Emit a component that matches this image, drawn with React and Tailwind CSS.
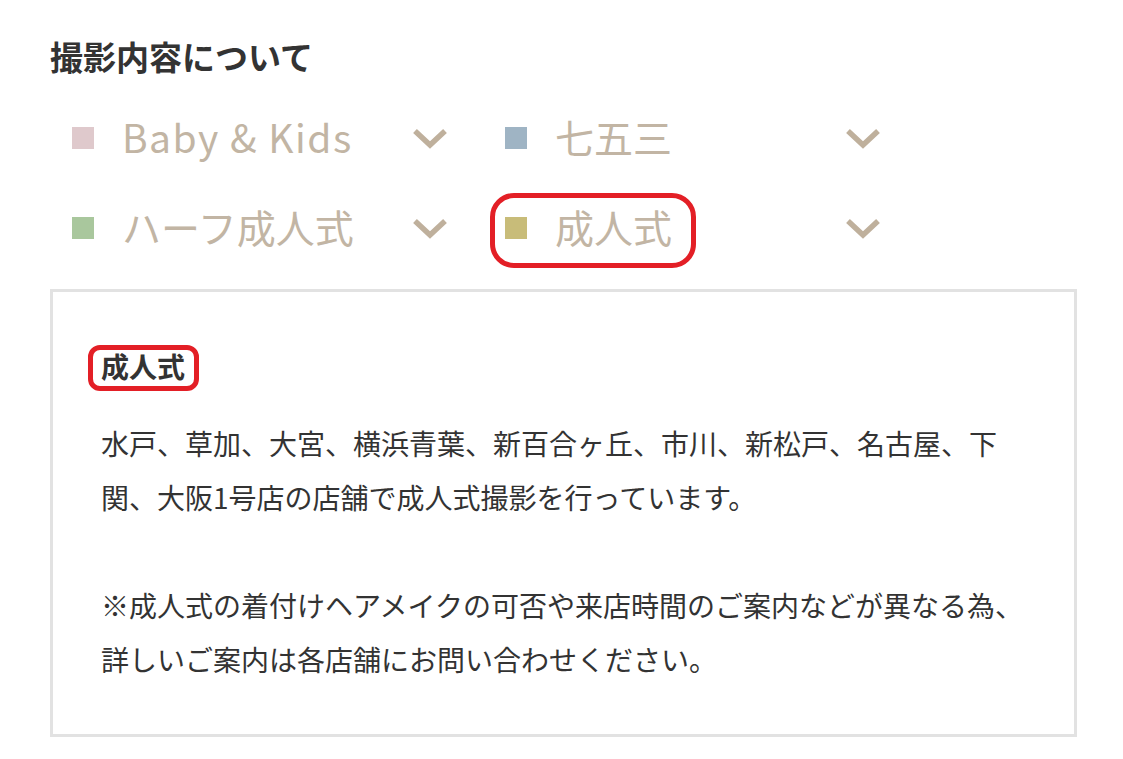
import React from "react";

const font = { fontFamily: '"Noto Sans CJK JP", "Noto Sans", sans-serif' };

const Chevron = () => (
  <svg width="36" height="22" viewBox="0 0 36 22" className="shrink-0">
    <path d="M3 3 L18 17 L33 3" fill="none" stroke="#bfb09c" strokeWidth="5.5" />
  </svg>
);

const categories = [
  { label: "Baby & Kids", color: "bg-[#dfc9cc]", latin: true },
  { label: "七五三", color: "bg-[#9fb4c4]" },
  { label: "ハーフ成人式", color: "bg-[#a9c79d]" },
  { label: "成人式", color: "bg-[#c8bc79]", marked: true },
];

const CategoryItem = ({ label, color, marked, latin }) => (
  <div className="flex items-center justify-between h-[90px]">
    <span className="relative flex items-center h-[50px]">
      <span className={`w-[22px] h-[22px] mt-[-2px] ${color}`} />
      <span
        className={`ml-[28px] text-[39px] leading-none text-[#c2b5a4] mt-[-6px] ${
          latin ? "tracking-[1.5px]" : ""
        }`}
      >
        {label}
      </span>
      {marked && (
        <span className="absolute left-[-15px] right-[-24px] top-[-11px] bottom-[-14px] border-[5px] border-[#e31f26] rounded-[24px]" />
      )}
    </span>
    <Chevron />
  </div>
);

export default function App() {
  return (
    <div className="bg-white min-h-[759px] pl-[50px] pt-[31px]" style={font}>
      <h2 className="text-[33px] font-bold leading-[50px] text-[#333]">撮影内容について</h2>

      <div className="mt-[13px] ml-[22px] grid grid-cols-[376px_376px] gap-x-[57px]">
        {categories.map((c) => (
          <CategoryItem key={c.label} {...c} />
        ))}
      </div>

      <div className="mt-[15px] w-[1027px] border-[3px] border-[#e2e2e2] pl-[48px] pr-[40px] pt-[47px] pb-[48px] text-[#333]">
        <h3 className="relative inline-block text-[28px] font-bold leading-[54px]">
          成人式
          <span className="absolute left-[-13px] right-[-14px] top-[6px] bottom-[2px] border-[5px] border-[#e31f26] rounded-[12px]" />
        </h3>
        <div className="mt-[23px] text-[28px] leading-[54px] whitespace-nowrap">
          <p>
            水戸、草加、大宮、横浜青葉、新百合ヶ丘、市川、新松戸、名古屋、下
            <br />
            関、大阪1号店の店舗で成人式撮影を行っています。
          </p>
          <p className="mt-[54px]">
            ※成人式の着付けヘアメイクの可否や来店時間のご案内などが異なる為、
            <br />
            詳しいご案内は各店舗にお問い合わせください。
          </p>
        </div>
      </div>
    </div>
  );
}
